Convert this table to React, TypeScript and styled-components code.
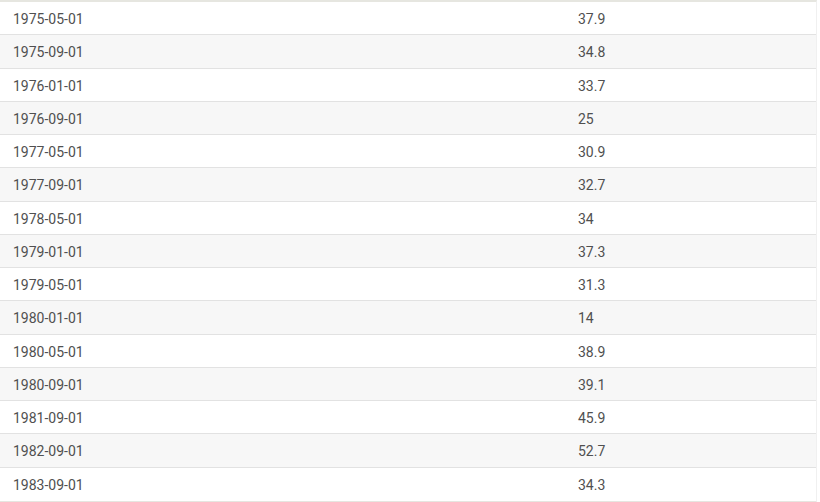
import React from 'react';
import styled, { createGlobalStyle } from 'styled-components';

const ROWS: [string, string][] = [
    ['1975-05-01', '37.9'],
    ['1975-09-01', '34.8'],
    ['1976-01-01', '33.7'],
    ['1976-09-01', '25'],
    ['1977-05-01', '30.9'],
    ['1977-09-01', '32.7'],
    ['1978-05-01', '34'],
    ['1979-01-01', '37.3'],
    ['1979-05-01', '31.3'],
    ['1980-01-01', '14'],
    ['1980-05-01', '38.9'],
    ['1980-09-01', '39.1'],
    ['1981-09-01', '45.9'],
    ['1982-09-01', '52.7'],
    ['1983-09-01', '34.3'],
];

const GlobalStyle = createGlobalStyle`
  body {
    margin: 0;
    background: #ffffff;
    font-family: Roboto, "Liberation Sans", sans-serif;
  }
`;

const Table = styled.div`
  width: 816px;
  border-top: 2px solid #e6e6e0;
  border-bottom: 2px solid #e6e6e0;
  border-right: 1px solid #f0f0f0;
`;

const Row = styled.div<{ alt?: boolean }>`
  display: grid;
  grid-template-columns: 565px 1fr;
  height: 33.25px;
  box-sizing: border-box;
  padding-top: 2px;
  align-items: center;
  background-color: ${({ alt }) => alt ? '#f7f7f7' : '#ffffff'};
  border-bottom: 1px solid #e2e2e2;

  &:last-child {
    border-bottom: none;
  }
`;

const Cell = styled.div`
  padding: 0 13px;
  font-size: 14px;
  color: #505050;
`;

const App = () => (
    <>
        <GlobalStyle/>
        <Table>
            {ROWS.map(([date, value], i) => (
                <Row key={date} alt={i % 2 === 1}>
                    <Cell>{date}</Cell>
                    <Cell>{value}</Cell>
                </Row>
            ))}
        </Table>
    </>
);

export default App;
